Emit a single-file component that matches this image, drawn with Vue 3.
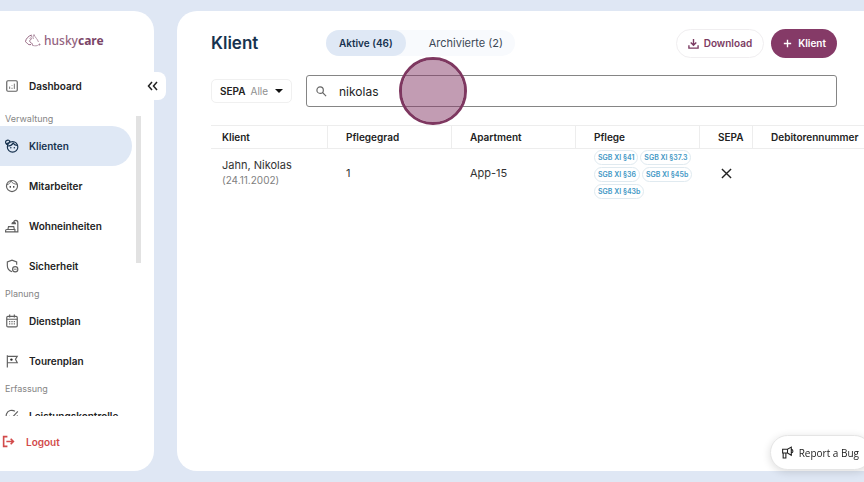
<script setup>
import { ref } from 'vue'

const query = ref('nikolas')
const sepa = ref('Alle')
const activeTab = ref('aktive')
const tabs = [
  { id: 'aktive', label: 'Aktive (46)' },
  { id: 'archivierte', label: 'Archivierte (2)' },
]
const sections = [
  {
    title: 'Verwaltung',
    items: [
      { label: 'Klienten', icon: 'client', active: true },
      { label: 'Mitarbeiter', icon: 'face' },
      { label: 'Wohneinheiten', icon: 'room' },
      { label: 'Sicherheit', icon: 'shield' },
    ],
  },
  {
    title: 'Planung',
    items: [
      { label: 'Dienstplan', icon: 'calendar' },
      { label: 'Tourenplan', icon: 'flag' },
    ],
  },
  { title: 'Erfassung', items: [{ label: 'Leistungskontrolle', icon: 'check' }] },
]
const clients = [
  {
    name: 'Jahn, Nikolas',
    birth: '(24.11.2002)',
    grade: '1',
    apartment: 'App-15',
    care: ['SGB XI §41', 'SGB XI §37.3', 'SGB XI §36', 'SGB XI §45b', 'SGB XI §43b'],
  },
]
</script>

<template>
  <div class="page">
    <aside class="sidebar">
      <a class="logo" href="#" aria-label="huskycare">
        <svg viewBox="0 0 32 26" aria-hidden="true">
          <path d="M13 2C7 4 2 9 1 15c0 2 3 2 4 4 1 2 4 3 7 2M14 9c-4 2-6 5-3 8 3 1 4 3 4 6" />
          <path class="logo-soft" d="M13 2c1 3-1 5-4 8M18 1c2 6 7 9 9 15M18 1c-2 4-3 6-1 9M16 23c4 1 8 1 11-1" />
          <circle cx="29" cy="21" r="1" />
        </svg>
        <span>husky<b>care</b></span>
      </a>

      <div class="dashboard-row">
        <a class="nav-item" href="#">
          <svg class="icon" viewBox="0 0 24 24" aria-hidden="true">
            <rect x="3" y="3" width="18" height="18" rx="2" />
            <path class="thin" d="M8 13v4M12 15v2M16 8v9M12 11v1" />
          </svg>
          <span>Dashboard</span>
        </a>
        <button class="collapse" type="button" aria-label="Menü einklappen">
          <svg viewBox="0 0 12 12" aria-hidden="true"><path d="M5 2 1.500 6 5 10M10 2 6.500 6 10 10" /></svg>
        </button>
      </div>

      <div class="nav-area">
        <nav class="nav-scroll">
          <section v-for="section in sections" :key="section.title">
            <h2>{{ section.title }}</h2>
            <a
              v-for="item in section.items"
              :key="item.label"
              class="nav-item"
              :class="{ active: item.active }"
              href="#"
            >
              <svg class="icon" viewBox="0 0 24 24" aria-hidden="true">
                <g v-if="item.icon === 'client'">
                  <circle cx="13" cy="13.500" r="9" />
                  <path d="M5 12c4 0 7-2 9-5 2 3 4 4 7 4M5 10C1 9 0 5 2 3c3-2 6-1 7 2M3 7c2 1 4 0 5-3" />
                  <circle class="dot" cx="10" cy="15" r="1.300" />
                  <circle class="dot" cx="16" cy="15" r="1.300" />
                </g>
                <g v-else-if="item.icon === 'face'">
                  <circle cx="12" cy="12" r="9.500" />
                  <path class="thin" d="M3 10c4-1 6-3 7-7 2 4 6 6 11 6" />
                  <circle class="dot" cx="9" cy="13.500" r="1.300" />
                  <circle class="dot" cx="15" cy="13.500" r="1.300" />
                </g>
                <g v-else-if="item.icon === 'room'">
                  <path d="M1 22h21V6c0-5-7-5-7 0M12 8c0-3 6-3 6 0ZM3 18h14v4H1v-2c0-1 1-2 2-2ZM5 18l1-5h9l1 5" />
                </g>
                <g v-else-if="item.icon === 'shield'">
                  <path d="M20 10V5l-8-3-8 3v6c0 5 3 9 8 11" />
                  <circle cx="17.500" cy="17.500" r="4.500" />
                  <path class="thin" d="M15 17.500h5" />
                </g>
                <g v-else-if="item.icon === 'calendar'">
                  <rect x="3" y="4" width="18" height="18" rx="2" />
                  <path d="M3 9h18M8 1v5M16 1v5M7 13h2M11 13h2M15 13h2M7 17h2M11 17h2M15 17h2" />
                </g>
                <g v-else-if="item.icon === 'flag'">
                  <path d="M4 2v21M4 4h17l-3 5 3 6H4" />
                  <circle class="dot" cx="11" cy="9.500" r="2" />
                </g>
                <g v-else>
                  <path d="M21 11a9.500 9.500 0 1 1-4-7M7 12l4 4L22 4" />
                </g>
              </svg>
              <span>{{ item.label }}</span>
            </a>
          </section>
        </nav>
        <span class="scroll-thumb"></span>
      </div>

      <a class="logout" href="#">
        <svg viewBox="0 0 24 24" aria-hidden="true">
          <path d="M10 3H3v18h7M8 12h13M16 7l5 5-5 5" />
        </svg>
        <span>Logout</span>
      </a>
    </aside>

    <main class="content">
      <header class="top">
        <h1>Klient</h1>
        <div class="tabs" role="tablist">
          <button
            v-for="tab in tabs"
            :key="tab.id"
            type="button"
            role="tab"
            :aria-selected="activeTab === tab.id"
            :class="{ selected: activeTab === tab.id }"
            @click="activeTab = tab.id"
          >
            {{ tab.label }}
          </button>
        </div>
        <div class="actions">
          <button class="download" type="button">
            <svg viewBox="0 0 12 12" aria-hidden="true"><path d="M6 1v7M3 5l3 3 3-3M1 8v3h10V8" /></svg>
            Download
          </button>
          <button class="add" type="button">
            <svg viewBox="0 0 12 12" aria-hidden="true"><path d="M6 2v8M2 6h8" /></svg>
            Klient
          </button>
        </div>
      </header>

      <div class="filters">
        <div class="sepa">
          <label for="sepa">SEPA</label>
          <select id="sepa" v-model="sepa">
            <option>Alle</option>
            <option>Ja</option>
            <option>Nein</option>
          </select>
          <svg viewBox="0 0 8 4" aria-hidden="true"><path d="M0 0h8L4 4Z" /></svg>
        </div>
        <div class="search">
          <label for="search" aria-label="Suche">
            <svg viewBox="0 0 12 12" aria-hidden="true"><circle cx="4.500" cy="4.500" r="3.500" /><path d="m7 7 4 4" /></svg>
          </label>
          <input id="search" v-model="query" type="text" />
          <span class="pointer"></span>
        </div>
      </div>

      <table>
        <thead>
          <tr>
            <th class="c-client">Klient</th>
            <th class="c-mid">Pflegegrad</th>
            <th class="c-mid">Apartment</th>
            <th class="c-mid">Pflege</th>
            <th class="c-sepa">SEPA</th>
            <th>Debitorennummer</th>
          </tr>
        </thead>
        <tbody>
          <tr v-for="client in clients" :key="client.name">
            <td>{{ client.name }}<br /><span class="birth">{{ client.birth }}</span></td>
            <td>{{ client.grade }}</td>
            <td>{{ client.apartment }}</td>
            <td class="care">
              <div class="badges">
                <span v-for="law in client.care" :key="law">{{ law }}</span>
              </div>
            </td>
            <td>
              <svg class="cross" viewBox="0 0 12 12" role="img" aria-label="Nein"><path d="m1 1 10 10M11 1 1 11" /></svg>
            </td>
            <td></td>
          </tr>
        </tbody>
      </table>
    </main>

    <button class="report" type="button">
      <svg viewBox="0 0 24 24" aria-hidden="true">
        <path d="M3 6h9l7-4v15l-7-4H3ZM4 13v9h5v-9M12 6v7M19 6c4 1 4 6 0 7" />
      </svg>
      Report a Bug
    </button>
  </div>
</template>

<style>
body {
  background: #dfe7f4;
}
</style>

<style scoped>
.page {
  box-sizing: border-box;
  height: 100vh;
  padding: 11px 0;
  display: flex;
  gap: 23px;
  overflow: hidden;
  font-family: Inter, "Noto Sans", sans-serif;
  font-size: 10px;
  color: #222;
}
.page *,
.page *::before {
  box-sizing: border-box;
}
svg {
  flex: none;
  fill: none;
  stroke: currentColor;
}
a {
  color: inherit;
  text-decoration: none;
}
button,
input,
select {
  font: inherit;
  color: inherit;
  border: 0;
  margin: 0;
  padding: 0;
  background: none;
}

.sidebar {
  flex: none;
  width: 154px;
  display: flex;
  flex-direction: column;
  background: #fff;
  border-radius: 0 20px 20px 0;
}
.logo {
  height: 55px;
  padding: 3px 0 0 25px;
  display: flex;
  align-items: center;
  gap: 3px;
  font-family: "Noto Sans", sans-serif;
  font-size: 12px;
  font-weight: 500;
  color: #94647f;
}
.logo b {
  font-weight: 700;
  color: #7b4567;
}
.logo svg {
  width: 16px;
  height: 13px;
  stroke-width: 2;
}
.logo-soft {
  stroke: #b79aac;
}
.dashboard-row {
  display: flex;
  align-items: center;
  justify-content: space-between;
  height: 40px;
  margin-right: -12px;
}
.collapse {
  width: 26px;
  height: 28px;
  display: grid;
  place-items: center;
  background: #fff;
  border-radius: 0 8px 8px 0;
}
.collapse svg {
  width: 12px;
  height: 12px;
  stroke-width: 1.500;
}
.nav-area {
  flex: 1;
  min-height: 0;
  margin-top: 5px;
  display: flex;
  gap: 4px;
}
.nav-scroll {
  width: 132px;
  overflow-y: auto;
  scrollbar-width: none;
}
.scroll-thumb {
  width: 5px;
  height: 147px;
  margin-top: 5px;
  background: #e2e2e2;
}
h2 {
  margin: 0;
  padding-left: 5px;
  font-size: 9px;
  line-height: 15px;
  font-weight: 400;
  color: #858585;
}
.nav-item {
  height: 40px;
  padding-left: 5px;
  display: flex;
  align-items: center;
  gap: 10px;
  font-weight: 600;
  white-space: nowrap;
  border-radius: 0 20px 20px 0;
}
.nav-item.active {
  background: #dfe8f5;
  color: #17324f;
}
.icon {
  width: 14px;
  height: 14px;
  stroke: #606060;
  stroke-width: 2;
}
.active .icon {
  stroke: #17324f;
}
.thin {
  stroke-width: 1.500;
}
.dot {
  fill: currentColor;
  stroke: none;
}
.logout {
  height: 55px;
  padding: 0 0 4px 2px;
  display: flex;
  align-items: center;
  gap: 11px;
  font-weight: 600;
  color: #d24a4a;
}
.logout svg {
  width: 13px;
  height: 13px;
  stroke-width: 3;
}

.content {
  flex: 1;
  min-width: 0;
  padding: 17px 0 0 34px;
  background: #fff;
  border-radius: 20px 0 0 20px;
}
.top {
  height: 30px;
  margin-right: 27px;
  display: flex;
  align-items: center;
}
h1 {
  width: 115px;
  margin: 0;
  font-size: 17px;
  font-weight: 600;
  color: #17324f;
}
.tabs {
  display: flex;
  background: #f8fafd;
  border-radius: 13px;
  color: #3c4856;
}
.tabs button {
  height: 26px;
  padding: 0 12px 0 23px;
  border-radius: 13px;
  font-size: 11px;
}
.tabs .selected {
  padding: 0 13px;
  background: #dfe8f5;
  color: #17324f;
  font-size: 10px;
  font-weight: 600;
}
.actions {
  margin-left: auto;
  display: flex;
  gap: 7px;
}
.actions button {
  height: 29px;
  display: flex;
  align-items: center;
  gap: 5px;
  padding: 0 11px;
  border-radius: 15px;
  font-weight: 600;
}
.actions svg {
  width: 11px;
  height: 11px;
  stroke-width: 1.500;
}
.actions .download {
  border: 1px solid #f0eef0;
  color: #7b3b62;
}
.actions .add {
  background: #853a67;
  color: #fff;
}
.filters {
  margin: 17px 27px 0 0;
  display: flex;
  align-items: center;
  gap: 14px;
}
.sepa {
  width: 81px;
  height: 24px;
  display: flex;
  align-items: center;
  padding: 0 8px;
  border: 1px solid #f0f0f0;
  border-radius: 5px;
}
.sepa label {
  font-weight: 600;
}
.sepa select {
  flex: 1;
  min-width: 0;
  padding-left: 5px;
  appearance: none;
  color: #909090;
}
.sepa svg {
  width: 8px;
  height: 4px;
  fill: #111;
  stroke: none;
}
.search {
  position: relative;
  flex: 1;
  height: 32px;
  display: flex;
  align-items: center;
  padding-left: 9px;
  border: 1px solid #858585;
  border-radius: 3px;
}
.search label {
  display: flex;
}
.search svg {
  width: 11px;
  height: 11px;
  stroke: #666;
  stroke-width: 1.300;
}
.search input {
  flex: 1;
  min-width: 0;
  height: 30px;
  padding-left: 12px;
  font-size: 12px;
  outline: 0;
}
/* Click highlight over the search field */
.pointer {
  position: absolute;
  left: 92px;
  top: -19px;
  width: 68px;
  height: 68px;
  border: 3px solid #7e3760;
  border-radius: 50%;
  background: rgba(134, 58, 103, 0.5);
  background-clip: padding-box;
  pointer-events: none;
}

table {
  width: 100%;
  margin-top: 18px;
  table-layout: fixed;
  border-collapse: separate;
  border-spacing: 0;
  text-align: left;
}
th {
  height: 24px;
  padding: 0 0 0 18px;
  font-weight: 600;
  white-space: nowrap;
  border: solid #ededed;
  border-width: 1px 1px 1px 0;
}
th:last-child {
  border-right: 0;
}
.c-client {
  width: 117px;
}
.c-mid {
  width: 124px;
}
.c-sepa {
  width: 53px;
}
td {
  height: 50px;
  padding: 0 0 2px 18px;
  font-size: 11px;
  line-height: 15px;
  color: #333;
}
th:first-child,
td:first-child {
  padding-left: 11px;
}
.birth {
  font-size: 10px;
  color: #808080;
}
td.care {
  padding-bottom: 0;
}
.badges {
  display: flex;
  flex-wrap: wrap;
  gap: 2px;
}
.badges span {
  height: 15px;
  padding: 0 3px;
  border: 1px solid #e0eaf0;
  border-radius: 8px;
  font-size: 7px;
  line-height: 13px;
  font-weight: 600;
  color: #4398c5;
}
.cross {
  display: block;
  width: 11px;
  height: 11px;
  margin-left: 3px;
  stroke: #222;
  stroke-width: 1.500;
}

.report {
  position: fixed;
  right: -8px;
  bottom: 12px;
  height: 35px;
  display: flex;
  align-items: center;
  gap: 5px;
  padding: 0 12px 0 10px;
  border: 1px solid #e5e5e5;
  border-radius: 18px;
  background: #fff;
  box-shadow: 0 2px 8px rgba(0, 0, 0, 0.14);
  font-family: "Open Sans", "Noto Sans", sans-serif;
  font-weight: 500;
  white-space: nowrap;
}
.report svg {
  width: 13px;
  height: 13px;
  stroke-width: 2;
}
</style>
